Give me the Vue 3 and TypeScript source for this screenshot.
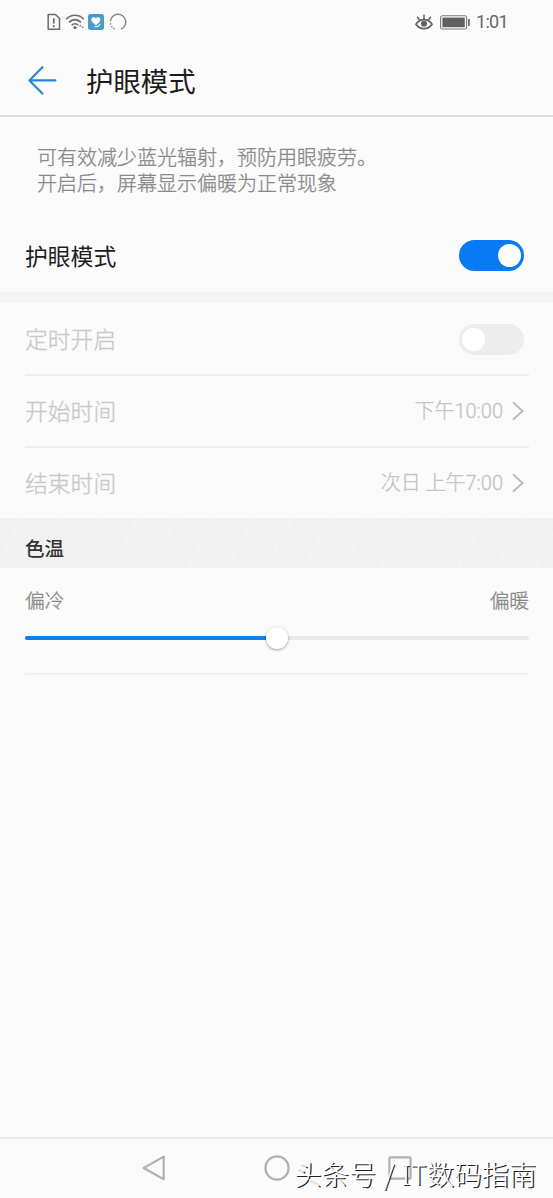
<script setup lang="ts">
import { ref } from 'vue'

interface TimeRow {
  label: string
  value: string
}

const enabled = ref(true)
const scheduled = ref(false)
const temperature = ref(50)
const times: TimeRow[] = [
  { label: '开始时间', value: '下午10:00' },
  { label: '结束时间', value: '次日 上午7:00' },
]
</script>

<template>
  <div class="screen">
    <div class="status">
      <div class="status-left">
        <svg class="sim" width="14" height="18" viewBox="0 0 14 18" fill="none" stroke="#6c6c6c" stroke-width="1.5">
          <path d="M1.2 1.5h7.3l4 4v10.8H1.2z" stroke-linejoin="round" />
          <path d="M6.8 5.3v5.3M6.8 12.3v1.9" stroke-width="1.7" />
        </svg>
        <svg class="wifi" width="21" height="18" viewBox="0 0 21 18" fill="none" stroke="#6c6c6c" stroke-width="1.7">
          <path d="M1.2 6.3C6 .9 14 .9 18.8 6.3" />
          <path d="M4 9.4c3.3-3.8 8.7-3.8 12 0" />
          <path d="M6.7 12.3c1.8-2.1 4.8-2.1 6.6 0" />
          <circle cx="10" cy="14.6" r="1.6" fill="#6c6c6c" stroke="none" />
          <path d="M13.8 13.4l1.5-2 1.3 2zM16.2 13.6l1.4 2 1.4-2z" fill="#8c8c8c" stroke="none" />
        </svg>
        <svg class="app" width="16" height="16" viewBox="0 0 16 16">
          <rect width="16" height="16" rx="2.5" fill="#4a9bcb" />
          <path d="M8 11.2C4.8 9 3 7.2 3.3 5c.4-2 3.3-2.5 4.4-.6C9 2.5 11.9 3 12.3 5c.3 2.1-1.4 4-4.3 6.2z" fill="#fff" />
          <path d="M6.5 12.4c2.3.8 4.6-.3 5.8-2.5" fill="none" stroke="#d7edf8" stroke-width="1.2" />
        </svg>
        <svg class="loading" width="18" height="18" viewBox="0 0 18 18" fill="none" stroke="#858585" stroke-width="1.4">
          <path d="M5.6 15.9A7.7 7.7 0 0 1 1.3 9.6" stroke-dasharray="1.5 1.3" />
          <path d="M1.4 8.4A7.7 7.7 0 1 1 12 16.1" />
        </svg>
      </div>
      <div class="status-right">
        <svg width="18" height="17" viewBox="0 0 18 17" fill="none" stroke="#626262" stroke-width="1.7">
          <path d="M1 10.2c4-6 12-6 16 0-4 6-12 6-16 0z" />
          <circle cx="9" cy="9.7" r="3" fill="#626262" stroke="none" />
          <path d="M9 5V.8M4.4 6L2.2 2.6M13.6 6l2.2-3.4" stroke-width="1.5" />
        </svg>
        <svg class="battery" width="30" height="15" viewBox="0 0 30 15">
          <rect x=".6" y=".8" width="26" height="13.2" rx="1.8" fill="none" stroke="#7b7b7b" stroke-width="1.1" />
          <rect x="2.4" y="2.6" width="22.4" height="9.6" fill="#606060" />
          <rect x="28" y="4" width="1.8" height="7" rx=".5" fill="#707070" />
        </svg>
        <span class="clock">1:01</span>
      </div>
    </div>

    <header class="header">
      <svg width="30" height="30" viewBox="0 0 30 30" fill="none" stroke="#2585dd" stroke-width="2.1" stroke-linecap="round" stroke-linejoin="round">
        <path d="M15.4 1.2L2.4 14.4l13 13.2M2.4 14.4h26" />
      </svg>
      <h1>护眼模式</h1>
    </header>

    <p class="description">可有效减少蓝光辐射，预防用眼疲劳。<br />开启后，屏幕显示偏暖为正常现象</p>

    <div class="row main-row">
      <span>护眼模式</span>
      <button class="switch" :class="{ on: enabled }" aria-label="护眼模式" @click="enabled = !enabled"><i /></button>
    </div>

    <div class="band" />

    <div class="group">
      <div class="row disabled">
        <span>定时开启</span>
        <button class="switch" :class="{ on: scheduled }" aria-label="定时开启" disabled><i /></button>
      </div>
      <div v-for="row in times" :key="row.label" class="row disabled">
        <span>{{ row.label }}</span>
        <div class="value">
          <span>{{ row.value }}</span>
          <svg width="12" height="20" viewBox="0 0 12 20" fill="none" stroke="#bcbcbc" stroke-width="2">
            <path d="M1 1.2L10.6 10 1 18.8" />
          </svg>
        </div>
      </div>
    </div>

    <h2 class="section">色温</h2>

    <div class="temperature">
      <div class="labels"><span>偏冷</span><span>偏暖</span></div>
      <div class="track">
        <div class="fill" :style="{ width: temperature + '%' }" />
        <div class="thumb" />
      </div>
    </div>

    <nav class="nav">
      <svg width="24" height="28" viewBox="0 0 24 28" fill="none" stroke="#b1b1b1" stroke-width="2.2" stroke-linejoin="round">
        <path d="M21.7 2.6v22.6L1.7 14z" />
      </svg>
      <svg width="26" height="26" viewBox="0 0 26 26" fill="none" stroke="#b1b1b1" stroke-width="2.2">
        <circle cx="13" cy="13" r="11.6" />
      </svg>
      <svg width="24" height="24" viewBox="0 0 24 24" fill="none" stroke="#b1b1b1" stroke-width="2.2">
        <rect x="1.4" y="1.4" width="21.2" height="21.2" rx="1" />
      </svg>
      <div class="watermark">头条号 / <span class="latin">IT</span>数码指南</div>
    </nav>
  </div>
</template>

<style>
body {
  margin: 0;
  background: #fbfbfb;
}
</style>

<style scoped>
.screen {
  display: flex;
  flex-direction: column;
  box-sizing: border-box;
  width: 100%;
  height: 1198px;
  overflow: hidden;
  background: #fbfbfb;
  color: #1c1c1c;
  font-family: 'Noto Sans CJK SC', sans-serif;
}

svg {
  display: block;
  flex: none;
}

.status {
  display: flex;
  justify-content: space-between;
  height: 44px;
  padding: 0 45px 0 47px;
}

.status-left,
.status-right {
  display: flex;
  align-items: center;
}

.wifi {
  margin-left: 4px;
}

.app {
  margin-left: 2px;
}

.loading {
  margin-left: 5px;
}

.battery {
  margin-left: 7px;
}

.clock {
  width: 32px;
  margin-left: 6px;
  color: #686868;
  font: 18px/44px Roboto, sans-serif;
  letter-spacing: -0.7px;
  white-space: nowrap;
}

.header {
  display: flex;
  align-items: center;
  box-sizing: border-box;
  height: 73px;
  padding: 2px 27px 0;
  border-bottom: 2px solid #dcdcdc;
}

.header h1 {
  margin: 0 0 1px 29px;
  font-size: 27.4px;
  font-weight: 400;
  line-height: 40px;
}

.description {
  margin: 0;
  padding: 28px 37px 0;
  height: 75px;
  color: #888;
  font-family: Roboto, 'Noto Sans CJK SC', sans-serif;
  font-size: 20px;
  font-weight: 300;
  line-height: 26px;
  -webkit-text-stroke: 0.3px #888;
}

.row {
  display: flex;
  align-items: center;
  justify-content: space-between;
  box-sizing: border-box;
  font-size: 22.8px;
  line-height: 34px;
}

.main-row {
  height: 72px;
  padding: 0 29px 2px 25px;
}

.main-row span {
  margin-top: 1px;
}

.switch {
  display: flex;
  align-items: center;
  width: 65px;
  height: 31px;
  padding: 0 3px;
  border: 0;
  border-radius: 16px;
  background: #ededed;
}

.switch i {
  width: 23px;
  height: 23px;
  border-radius: 50%;
  background: #fff;
}

.switch.on {
  justify-content: flex-end;
  background: #087af5;
}

.band {
  height: 11px;
  background: #f4f4f4;
}

.group {
  height: 215px;
  padding: 0 24px 0 25px;
}

.group .row {
  height: 72px;
  padding-right: 5px;
  border-bottom: 2px solid #ededed;
}

.group .row:first-child {
  height: 73px;
  padding-top: 1px;
}

.group .row:last-child {
  height: 70px;
  border-bottom: 0;
}

.disabled {
  color: #c8c8c8;
  font-weight: 300;
  -webkit-text-stroke: 0.3px #c8c8c8;
}

.value {
  display: flex;
  align-items: center;
  gap: 9px;
  color: #c0c0c0;
  font-family: Roboto, 'Noto Sans CJK SC', sans-serif;
  font-size: 20px;
}

.section {
  box-sizing: border-box;
  height: 50px;
  margin: 0;
  padding: 12px 25px 0;
  background: repeating-linear-gradient(118deg, #f1f1f1 0 18px, #f4f4f4 20px, #f1f1f1 22px 34px);
  color: #333;
  font-size: 19.5px;
  font-weight: 500;
  line-height: 36px;
}

.temperature {
  box-sizing: border-box;
  height: 107px;
  margin: 0 24px 0 25px;
  padding-top: 18px;
  border-bottom: 2px solid #f0f0f5;
}

.labels {
  display: flex;
  justify-content: space-between;
  color: #858585;
  font-size: 19.7px;
  font-weight: 300;
  line-height: 28px;
  -webkit-text-stroke: 0.3px #858585;
}

.track {
  display: flex;
  align-items: center;
  height: 4px;
  margin-top: 22px;
  border-radius: 2px;
  background: #e8e8e8;
}

.fill {
  height: 4px;
  border-radius: 2px;
  background: #117de8;
}

.thumb {
  flex: none;
  width: 22px;
  height: 22px;
  margin-left: -11px;
  border-radius: 50%;
  background: #fff;
  box-shadow: 0 1px 3px rgba(0, 0, 0, 0.38);
}

.nav {
  position: relative;
  display: flex;
  align-items: center;
  gap: 98px;
  box-sizing: border-box;
  height: 61px;
  margin-top: auto;
  padding: 0 0 2px 142px;
  border-top: 2px solid #ececec;
}

.watermark {
  position: absolute;
  left: 294px;
  top: 14px;
  color: #fff;
  font-size: 27.3px;
  font-weight: 300;
  line-height: 40px;
  text-shadow: 1.4px 1.4px 0 #222;
  word-spacing: 1.5px;
  white-space: nowrap;
}

.latin {
  font-family: 'Noto Sans', sans-serif;
  letter-spacing: 1px;
}
</style>
